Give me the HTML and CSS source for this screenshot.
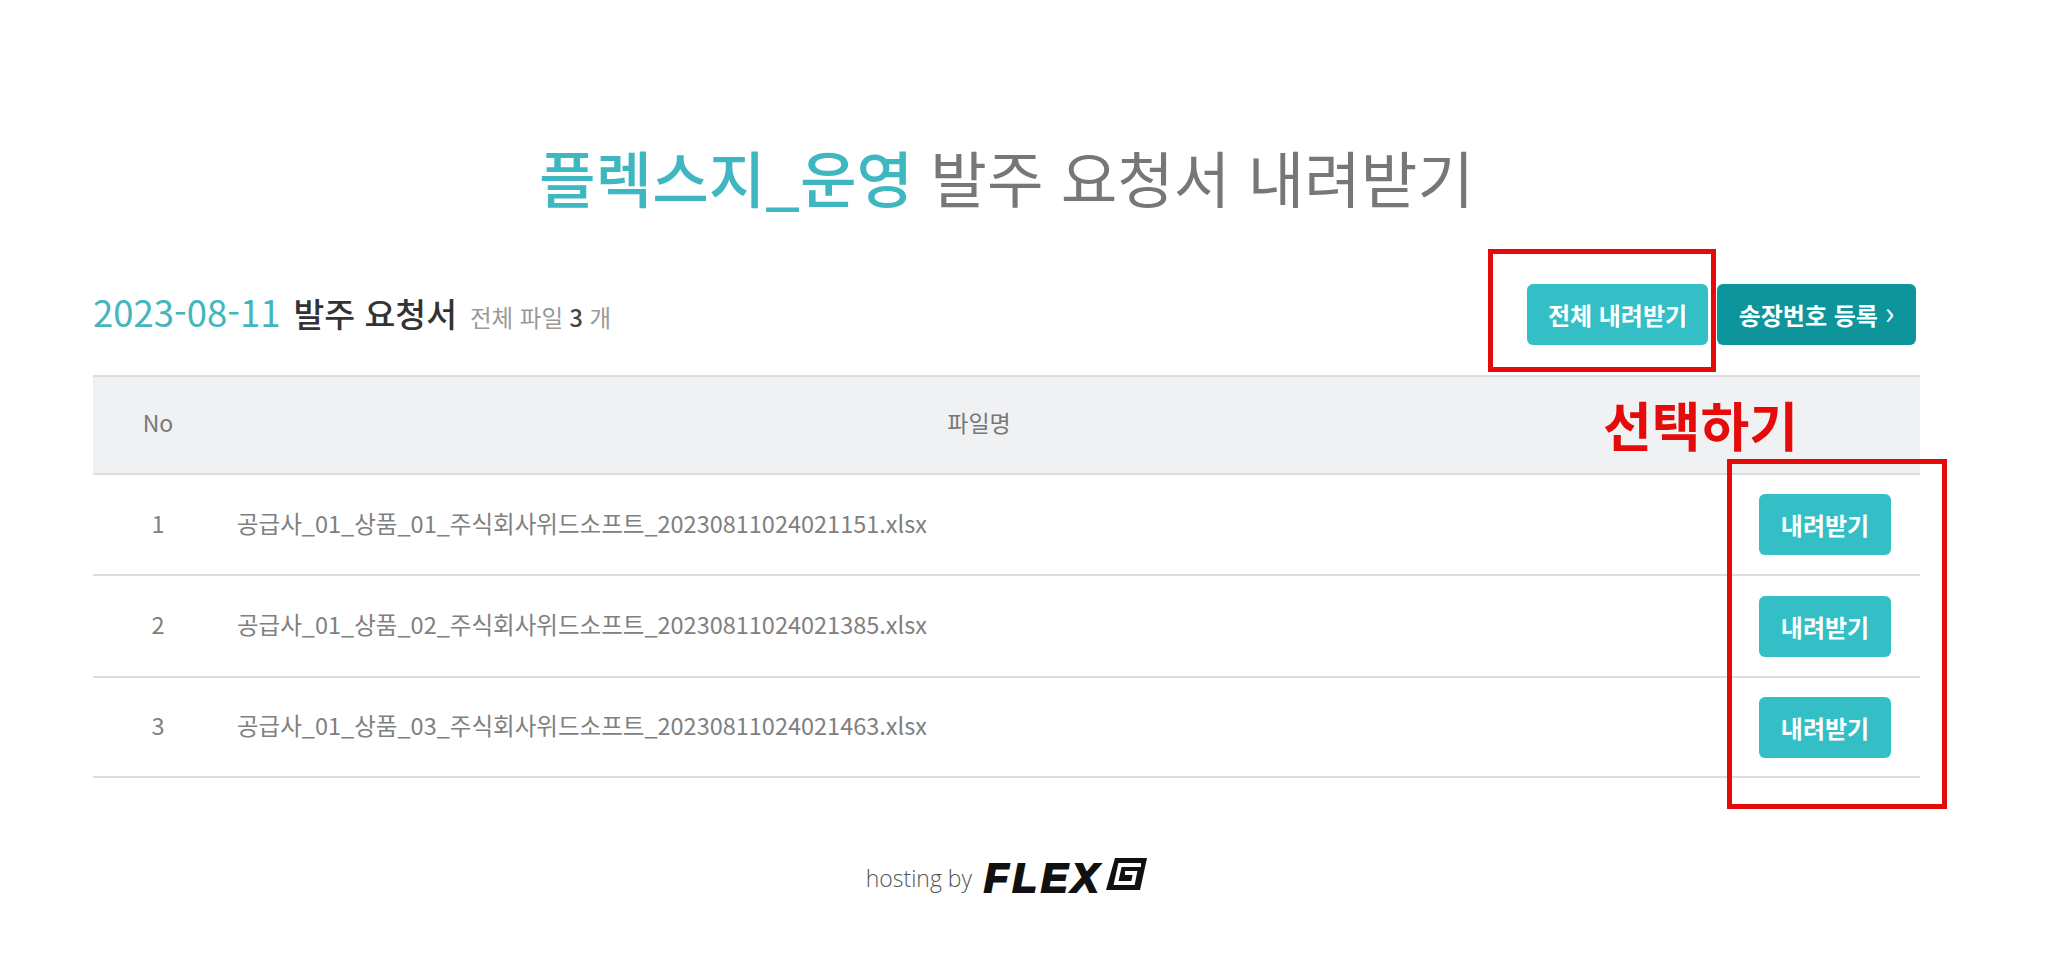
FILE: index.html
```html
<!DOCTYPE html>
<html lang="ko">
<head>
    <meta charset="UTF-8">
    <title>발주 요청서 내려받기</title>
    <link rel="stylesheet" href="styles.css">
</head>
<body>
    <div class="wrap">
        <h1 class="page-title"><span class="teal">플렉스지_운영</span> 발주 요청서 내려받기</h1>

        <div class="list-head">
            <div class="list-title">
                <span class="date">2023-08-11</span>
                <strong>발주 요청서</strong>
                <span class="count">전체 파일 <b>3</b> 개</span>
            </div>
            <div class="list-btns">
                <a href="#" class="btn btn-all">전체 내려받기</a>
                <a href="#" class="btn btn-dark">송장번호 등록 <span class="arrow">›</span></a>
            </div>
        </div>

        <table class="file-table">
            <thead>
                <tr>
                    <th class="col-no">No</th>
                    <th>파일명</th>
                    <th class="col-btn"></th>
                </tr>
            </thead>
            <tbody>
                <tr>
                    <td class="col-no">1</td>
                    <td class="col-name">공급사_01_상품_01_주식회사위드소프트_20230811024021151.xlsx</td>
                    <td class="col-btn"><a href="#" class="btn btn-down">내려받기</a></td>
                </tr>
                <tr>
                    <td class="col-no">2</td>
                    <td class="col-name">공급사_01_상품_02_주식회사위드소프트_20230811024021385.xlsx</td>
                    <td class="col-btn"><a href="#" class="btn btn-down">내려받기</a></td>
                </tr>
                <tr>
                    <td class="col-no">3</td>
                    <td class="col-name">공급사_01_상품_03_주식회사위드소프트_20230811024021463.xlsx</td>
                    <td class="col-btn"><a href="#" class="btn btn-down">내려받기</a></td>
                </tr>
            </tbody>
        </table>

        <div class="footer">
            <span class="hosting">hosting by</span>
            <span class="flex-logo">FLEX</span>
            <svg class="flex-g" viewBox="0 0 41 32" width="41" height="32">
                <path d="M9 0H41L34 32H0Z" fill="#111"/>
                <path d="M35 7H14L10 25H27L29 15H19" fill="none" stroke="#fff" stroke-width="4"/>
            </svg>
        </div>

        <!-- red marks drawn over the screenshot -->
        <div class="mark mark-all"></div>
        <div class="mark mark-rows"></div>
        <div class="mark-label">선택하기</div>
    </div>
</body>
</html>
```

FILE: styles.css
```css
* {
    margin: 0;
    padding: 0;
    box-sizing: border-box;
    font-family: "Noto Sans CJK KR", "Noto Sans", sans-serif;
}

body {
    background: #fff;
    color: #777;
}

.wrap {
    position: relative;
    width: 1827px;
    margin-left: 93px;
}

.teal {
    color: #3fb7c0;
    font-weight: 500;
}

/* Title */
.page-title {
    padding-top: 132px;
    height: 284px;
    font-size: 61.5px;
    line-height: 90px;
    font-weight: 400;
    text-align: center;
    color: #777;
}

/* List header */
.list-head {
    display: flex;
    justify-content: space-between;
    align-items: flex-start;
    height: 91px;
}

.list-title {
    display: flex;
    align-items: baseline;
    gap: 13px;
    margin-top: -3px;
    font-size: 33.5px;
    line-height: 61px;
}

.date {
    font-size: 36.5px;
    font-weight: 400;
    color: #45b5bd;
}

.list-title strong {
    font-weight: 500;
    color: #333;
}

.count {
    font-size: 23.5px;
    font-weight: 400;
    color: #999;
}

.count b {
    color: #444;
    font-weight: 500;
}

.list-btns {
    display: flex;
    gap: 9px;
    margin-right: 4px;
}

/* Buttons */
.btn {
    display: inline-block;
    height: 61px;
    line-height: 61px;
    border-radius: 6px;
    background: #34bfc6;
    color: #fff;
    font-size: 24px;
    font-weight: 700;
    text-align: center;
    text-decoration: none;
}

.btn-all {
    width: 181px;
}

.btn-dark {
    width: 199px;
    background: #0e959c;
}

.arrow {
    font-size: 32px;
    font-weight: 400;
    line-height: 1;
}

.btn-down {
    width: 132px;
}

/* Table */
.file-table {
    width: 100%;
    border-collapse: collapse;
    table-layout: fixed;
    border-top: 2px solid #ddd;
}

.file-table th {
    height: 98px;
    padding-bottom: 6px;
    background: #f0f1f3;
    font-size: 23px;
    font-weight: 400;
    color: #777;
    border-bottom: 2px solid #ddd;
}

.file-table td {
    height: 101px;
    font-size: 23.5px;
    font-weight: 400;
    color: #808080;
    border-bottom: 2px solid #ddd;
}

.file-table tbody tr:nth-child(2) td {
    height: 102px;
}

.file-table tbody tr:nth-child(3) td {
    height: 100px;
}

.col-no {
    width: 130px;
    text-align: center;
}

.file-table td.col-no,
.file-table td.col-name {
    padding-bottom: 4px;
}

.file-table td.col-name {
    padding-left: 14px;
}

.file-table .col-btn {
    width: 185px;
    padding-right: 29px;
    text-align: right;
}

/* Footer */
.footer {
    display: flex;
    justify-content: center;
    align-items: center;
    gap: 8px;
    margin-top: 78px;
    height: 44px;
}

.hosting {
    margin-right: 4px;
    font-family: "Open Sans", sans-serif;
    font-size: 23px;
    font-weight: 300;
    color: #555;
}

.flex-logo {
    font-family: "Liberation Sans", sans-serif;
    font-size: 40px;
    font-weight: 700;
    font-style: italic;
    color: #111;
    letter-spacing: 4px;
    -webkit-text-stroke: 2px #111;
}

.flex-g {
    margin-left: -4px;
    margin-bottom: 8px;
}

/* Red annotation marks */
.mark {
    position: absolute;
    border: 5px solid #e60b0b;
}

.mark-all {
    left: 1395px;
    top: 249px;
    width: 228px;
    height: 123px;
}

.mark-rows {
    left: 1634px;
    top: 459px;
    width: 220px;
    height: 350px;
}

.mark-label {
    position: absolute;
    left: 1510px;
    top: 389px;
    font-size: 53px;
    line-height: 70px;
    font-weight: 700;
    color: #e60b0b;
}
```
